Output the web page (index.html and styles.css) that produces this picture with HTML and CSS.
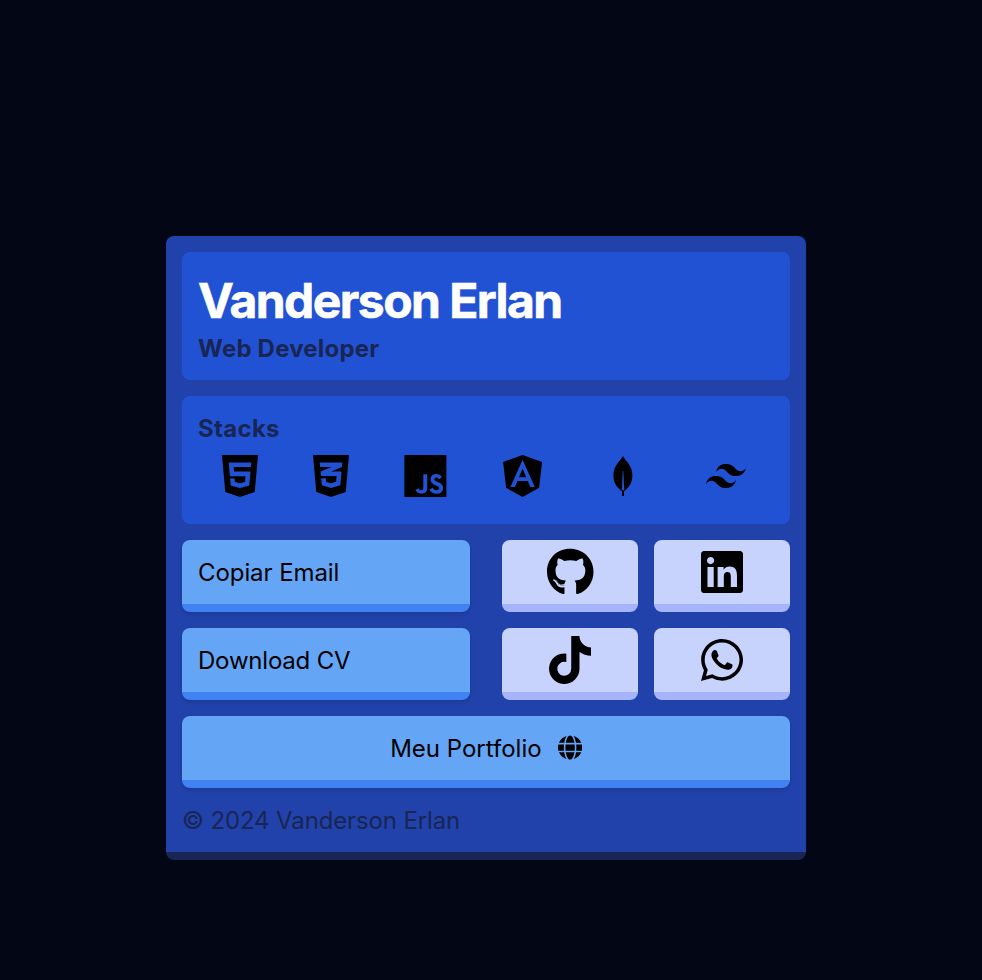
FILE: index.html
```html
<!DOCTYPE html>
<html lang="pt-BR">
<head>
<meta charset="utf-8">
<title>Vanderson Erlan</title>
<link rel="stylesheet" href="styles.css">
</head>
<body>
<main class="card">
  <header class="panel profile">
    <h1 class="name">Vanderson Erlan</h1>
    <h2 class="subtitle role">Web Developer</h2>
  </header>
  <section class="panel stacks">
    <h2 class="subtitle stacks-title">Stacks</h2>
    <div class="stack-icons">
      <svg class="icon" viewBox="0 0 384 512"><path d="M0 32l34.9 395.8L191.5 480l157.6-52.2L384 32H0zm308.2 127.9H124.4l4.1 49.4h175.6l-13.6 148.4-97.9 27v.3h-1.1l-98.7-27.3-6-75.8h47.7L138 320l53.5 14.5 53.7-14.5 6-62.2H84.3L71.5 112.2h241.1l-4.4 47.7z"/></svg>
      <svg class="icon" viewBox="0 0 384 512"><path d="M0 32l34.9 395.8L192 480l157.1-52.2L384 32H0zm313.1 80l-4.8 47.3L193 208.6l-.3.1h111.5l-12.8 146.6-98.2 28.7-98.8-29.2-6.4-73.9h48.9l3.2 38.3 52.6 13.3 54.7-15.4 3.7-61.6-166.3-.5v-.1l-.2.1-3.6-46.3L193.1 162l6.5-2.7H76.7L70.9 112h242.2z"/></svg>
      <svg class="icon" viewBox="-4 0 448 512"><path d="M0 32v448h448V32H0zm243.8 349.4c0 43.6-25.6 63.5-62.9 63.5-33.7 0-53.2-17.4-63.2-38.5l34.3-20.7c6.6 11.7 12.6 21.6 27.1 21.6 13.8 0 22.6-5.4 22.6-26.5V237.7h42.1v143.7zm99.6 63.5c-39.1 0-64.4-18.6-76.7-43l34.3-19.8c9 14.7 20.8 25.6 41.5 25.6 17.4 0 28.6-8.7 28.6-20.8 0-14.4-11.4-19.5-30.7-28l-10.5-4.5c-30.4-12.9-50.5-29.2-50.5-63.5 0-31.6 24.1-55.6 61.6-55.6 26.8 0 46 9.3 59.8 33.7L368 290c-7.2-12.9-15-18-27.1-18-12.3 0-20.1 7.8-20.1 18 0 12.6 7.8 17.7 25.9 25.6l10.5 4.5c35.8 15.3 55.9 31 55.9 66.2 0 37.8-29.8 58.6-69.7 58.6z"/></svg>
      <svg class="icon" viewBox="4 0 448 512"><path d="M185.7 268.1h76.2l-38.1-91.6-38.1 91.6zM223.8 32L16 106.4l31.8 275.7 176 97.9 176-97.9 31.8-275.7zM354 373.8h-48.6l-26.2-65.4H168.6l-26.2 65.4H93.7L223.8 81.5z"/></svg>
      <svg class="icon" viewBox="0 0 48 48"><path d="M24 4C22.3 8 14.4 13 14.4 23.5c0 8 4.500 12.500 8.600 15.700V44h2v-4.800c4.100-3.200 8.400-7.700 8.400-15.700C33.400 13 25.500 8 24 4zM23.700 19h.600l1 19.200h-2.400z"/></svg>
      <svg class="icon" viewBox="0 0 24 24"><path d="M12 6.036c-2.667 0-4.333 1.325-5 3.976 1-1.325 2.167-1.822 3.5-1.491.761.189 1.305.738 1.906 1.345.98.99 2.112 2.133 4.594 2.133 2.667 0 4.333-1.325 5-3.976-1 1.325-2.166 1.822-3.5 1.491-.761-.189-1.305-.738-1.906-1.345-.98-.99-2.112-2.133-4.594-2.133zM7 12c-2.667 0-4.333 1.325-5 3.976 1-1.326 2.167-1.822 3.5-1.491.761.189 1.305.738 1.906 1.345.98.99 2.112 2.133 4.594 2.133 2.667 0 4.333-1.325 5-3.976-1 1.325-2.166 1.822-3.5 1.491-.761-.189-1.305-.738-1.906-1.345C10.613 13.143 9.481 12 7 12z"/></svg>
    </div>
  </section>
  <div class="links">
    <div class="actions">
      <button class="button"><span class="copy">Copiar Email</span></button>
      <button class="button"><span class="download">Download CV</span></button>
    </div>
    <nav class="socials">
      <a class="social"><svg class="icon" viewBox="0 0 496 512"><path d="M165.9 397.4c0 2-2.3 3.6-5.2 3.6-3.3.3-5.6-1.3-5.6-3.6 0-2 2.3-3.6 5.2-3.6 3-.3 5.6 1.3 5.6 3.6zm-31.1-4.5c-.7 2 1.3 4.3 4.3 4.9 2.6 1 5.6 0 6.2-2s-1.3-4.3-4.3-5.2c-2.6-.7-5.5.3-6.2 2.3zm44.2-1.7c-2.9.7-4.9 2.6-4.6 4.9.3 2 2.9 3.3 5.9 2.6 2.9-.7 4.9-2.6 4.6-4.6-.3-1.9-3-3.2-5.9-2.9zM244.8 8C106.1 8 0 113.3 0 252c0 110.9 69.8 205.8 169.5 239.2 12.8 2.3 17.3-5.6 17.3-12.1 0-6.2-.3-40.4-.3-61.4 0 0-70 15-84.7-29.8 0 0-11.4-29.1-27.8-36.6 0 0-22.9-15.7 1.6-15.4 0 0 24.9 2 38.6 25.8 21.9 38.6 58.6 27.5 72.9 20.9 2.3-16 8.8-27.1 16-33.7-55.9-6.2-112.3-14.3-112.3-110.5 0-27.5 7.6-41.3 23.6-58.9-2.6-6.5-11.1-33.3 2.6-67.9 20.9-6.5 69 27 69 27 20-5.6 41.5-8.5 62.8-8.5s42.8 2.9 62.8 8.5c0 0 48.1-33.6 69-27 13.7 34.7 5.2 61.4 2.6 67.9 16 17.7 25.8 31.5 25.8 58.9 0 96.5-58.9 104.2-114.8 110.5 9.2 7.9 17 22.9 17 46.4 0 33.7-.3 75.4-.3 83.6 0 6.5 4.6 14.4 17.3 12.1C428.2 457.8 496 362.9 496 252 496 113.3 383.5 8 244.8 8zM97.2 352.9c-1.3 1-1 3.3.7 5.2 1.6 1.6 3.9 2.3 5.2 1 1.3-1 1-3.3-.7-5.2-1.6-1.6-3.9-2.3-5.2-1zm-10.8-8.1c-.7 1.3.3 2.9 2.3 3.9 1.6 1 3.6.7 4.3-.7.7-1.3-.3-2.9-2.3-3.9-2-.6-3.6-.3-4.3.7zm32.4 35.6c-1.6 1.3-1 4.3 1.3 6.2 2.3 2.3 5.2 2.6 6.5 1 1.3-1.3.7-4.3-1.3-6.2-2.2-2.3-5.2-2.6-6.5-1zm-11.4-14.7c-1.6 1-1.6 3.6 0 5.9 1.6 2.3 4.3 3.3 5.6 2.3 1.6-1.3 1.6-3.9 0-6.2-1.4-2.3-4-3.3-5.6-2z"/></svg></a>
      <a class="social"><svg class="icon" viewBox="0 0 448 512"><path d="M416 32H31.9C14.3 32 0 46.5 0 64.3v383.4C0 465.5 14.3 480 31.9 480H416c17.6 0 32-14.5 32-32.3V64.3c0-17.8-14.4-32.3-32-32.3zM135.4 416H69V202.2h66.5V416zm-33.2-243c-21.3 0-38.5-17.3-38.5-38.5S80.9 96 102.2 96c21.2 0 38.5 17.3 38.5 38.5 0 21.3-17.2 38.5-38.5 38.5zm282.1 243h-66.4V312c0-24.8-.5-56.7-34.5-56.7-34.6 0-39.9 27-39.9 54.9V416h-66.4V202.2h63.7v29.2h.9c8.9-16.8 30.6-34.5 62.2-34.5 66.5 0 79.9 43.8 79.9 100.9V416z"/></svg></a>
      <a class="social"><svg class="icon" viewBox="0 0 448 512"><path d="M448 209.91a210.06 210.06 0 0 1-122.77-39.25V349.38A162.55 162.55 0 1 1 185 188.31V278.2a74.62 74.62 0 1 0 52.23 71.18V0l88 0a121.18 121.18 0 0 0 1.86 22.17h0A122.18 122.18 0 0 0 381 102.39a121.43 121.43 0 0 0 67 20.14Z"/></svg></a>
      <a class="social"><svg class="icon" viewBox="0 0 448 512"><path d="M380.9 97.1C339 55.1 283.2 32 223.9 32c-122.4 0-222 99.6-222 222 0 39.1 10.2 77.3 29.6 111L0 480l117.7-30.9c32.4 17.7 68.9 27 106.1 27h.1c122.3 0 224.1-99.6 224.1-222 0-59.3-25.2-115-67.1-157zm-157 341.6c-33.2 0-65.7-8.9-94-25.7l-6.7-4-69.8 18.3L72 359.2l-4.4-7c-18.5-29.4-28.2-63.3-28.2-98.2 0-101.7 82.8-184.5 184.6-184.5 49.3 0 95.6 19.2 130.4 54.1 34.8 34.9 56.2 81.2 56.1 130.5 0 101.8-84.9 184.6-186.6 184.6zm101.2-138.2c-5.5-2.8-32.8-16.2-37.9-18-5.1-1.9-8.8-2.8-12.5 2.8-3.7 5.6-14.3 18-17.6 21.8-3.2 3.7-6.5 4.2-12 1.4-32.6-16.3-54-29.1-75.5-66-5.7-9.8 5.7-9.1 16.3-30.3 1.8-3.7.9-6.9-.5-9.7-1.4-2.8-12.5-30.1-17.1-41.2-4.5-10.8-9.1-10.5-12.5-10.5-3.2-.2-6.9-.2-10.6-.2-3.7 0-9.7 1.4-14.8 6.9-5.1 5.6-19.4 19-19.4 46.3 0 27.3 19.9 53.7 22.6 57.4 2.8 3.7 39.1 59.7 94.8 83.8 35.2 15.2 49 16.5 66.6 13.9 10.7-1.6 32.8-13.4 37.4-26.4 4.6-13 4.6-24.1 3.2-26.4-1.3-2.5-5-3.9-10.5-6.6z"/></svg></a>
    </nav>
  </div>
  <button class="button portfolio"><span class="portfolio-label">Meu Portfolio</span>
    <svg class="globe" viewBox="0 0 496 512"><path d="M336.5 160C322 70.7 287.8 8 248 8s-74 62.7-88.5 152h177zM152 256c0 22.2 1.2 43.5 3.3 64h185.3c2.1-20.5 3.3-41.8 3.3-64s-1.2-43.5-3.3-64H155.3c-2.1 20.5-3.3 41.8-3.3 64zm324.7-96c-28.6-67.9-86.5-120.4-158-141.6 24.4 33.8 41.2 84.7 50 141.6h108zM177.2 18.4C105.8 39.6 47.8 92.1 19.3 160h108c8.7-56.9 25.5-107.8 49.9-141.6zM487.4 192H372.7c2.1 21 3.3 42.5 3.3 64s-1.2 43-3.3 64h114.6c5.5-20.5 8.6-41.8 8.6-64s-3.1-43.5-8.5-64zM120 256c0-21.5 1.2-43 3.3-64H8.6C3.2 212.5 0 233.8 0 256s3.2 43.5 8.6 64h114.6c-2-21-3.2-42.5-3.2-64zm39.5 96c14.5 89.3 48.7 152 88.5 152s74-62.7 88.5-152h-177zm159.3 141.6c71.4-21.2 129.4-73.7 158-141.6h-108c-8.8 56.9-25.6 107.8-50 141.6zM19.3 352c28.6 67.9 86.5 120.4 158 141.6-24.4-33.8-41.2-84.7-50-141.6h-108z"/></svg>
  </button>
  <footer class="footer">© 2024 Vanderson Erlan</footer>
</main>
</body>
</html>
```
FILE: styles.css
```css
* { box-sizing: border-box; }
body {
  margin: 0;
  padding-top: 236px;
  min-height: 980px;
  background: #020615;
  color: #000;
  font: 400 24px/32px Inter, "Liberation Sans", sans-serif;
}
.card {
  width: 640px;
  height: 624px;
  margin-left: 166px;
  padding: 16px;
  display: flex;
  flex-direction: column;
  gap: 16px;
  background: #2142ab;
  border-bottom: 8px solid #192552;
  border-radius: 8px;
}
.card > * { flex-shrink: 0; }
.panel {
  height: 128px;
  padding: 16px;
  background: #2252d4;
  border-radius: 8px;
}
h1, h2 { margin: 0; }
.name {
  padding-top: 9px;
  font-size: 48px;
  line-height: 48px;
  color: #fff;
  letter-spacing: -1.55px;
  -webkit-text-stroke: .6px #fff;
}
.subtitle {
  font-size: 24px;
  line-height: 32px;
  color: #192552;
}
.role {
  margin-top: 8px;
  letter-spacing: .2px;
}
.stacks-title {
  padding-top: 1px;
  letter-spacing: .3px;
}
.stack-icons {
  display: flex;
  justify-content: space-between;
  padding: 7px 24px 0;
}
.icon { height: 48px; display: block; overflow: visible; }
.links { display: flex; gap: 32px; }
.actions {
  width: 288px;
  display: flex;
  flex-direction: column;
  gap: 16px;
}
.button {
  height: 72px;
  padding: 2px 16px 0;
  border: 0;
  border-bottom: 8px solid #4182f3;
  border-radius: 8px;
  background: #65a5f6;
  color: #000;
  font: inherit;
  text-align: left;
  box-shadow: 0 2px 4px rgba(0, 0, 0, .1), 0 2px 4px -2px rgba(0, 0, 0, .1);
}
.copy { letter-spacing: -.08px; }
.download { letter-spacing: -.2px; }
.socials {
  flex: 1;
  display: grid;
  grid-template-columns: 1fr 1fr;
  gap: 16px;
}
.social {
  height: 72px;
  display: flex;
  align-items: center;
  justify-content: center;
  background: #c7d2fd;
  border-bottom: 8px solid #a5b4fb;
  border-radius: 8px;
}
.portfolio {
  display: flex;
  align-items: center;
  justify-content: center;
  gap: 16px;
}
.globe { height: 25px; display: block; margin-bottom: 3px; }
.footer {
  padding-top: 1px;
  color: #192552;
  letter-spacing: -.13px;
}
```
